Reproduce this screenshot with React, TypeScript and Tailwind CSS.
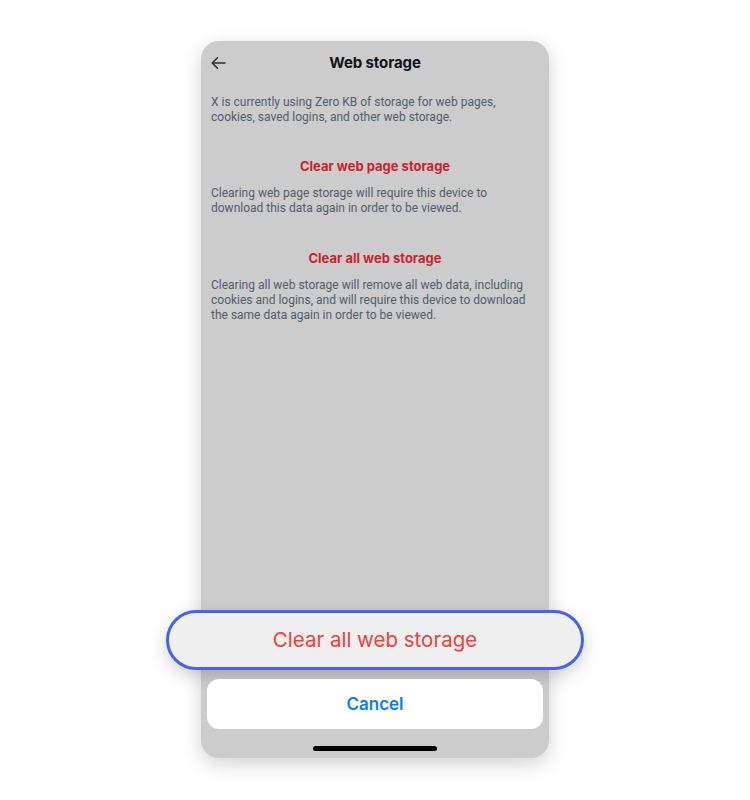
import React from 'react';

export default function App() {
  return (
    <div className="w-[750px] h-[800px] bg-white flex justify-center pt-[41px] font-['Inter','Noto_Sans',sans-serif]">
      <div className="w-[348px] h-[717px] bg-[#cccccc] rounded-[18px] shadow-[0_6px_20px_rgba(0,0,0,0.18)] flex flex-col">
        <div className="h-[44px] flex items-center relative px-[9px]">
          <svg width="18" height="18" viewBox="0 0 24 24" fill="none" stroke="#2a2a2a" strokeWidth="2" strokeLinecap="round" strokeLinejoin="round">
            <path d="M20 12H4" />
            <path d="M10 5l-7 7 7 7" />
          </svg>
          <div className="absolute inset-0 flex items-center justify-center text-[15px] font-bold text-[#0f1419] tracking-[-0.1px]">
            Web storage
          </div>
        </div>

        <div className="px-[10px] pt-[10px] font-['Roboto','Inter',sans-serif] text-[12px] leading-[15px] text-[#525d69]">
          <p>X is currently using Zero KB of storage for web pages, cookies, saved logins, and other web storage.</p>

          <div className="mt-[32px] text-center font-['Inter',sans-serif] text-[13px] leading-[18px] font-bold text-[#cc1f2e]">Clear web page storage</div>
          <p className="mt-[11px]">Clearing web page storage will require this device to download this data again in order to be viewed.</p>

          <div className="mt-[33px] text-center font-['Inter',sans-serif] text-[13px] leading-[18px] font-bold text-[#cc1f2e]">Clear all web storage</div>
          <p className="mt-[11px]">Clearing all web storage will remove all web data, including cookies and logins, and will require this device to download the same data again in order to be viewed.</p>
        </div>

        <div className="flex-1" />

        <div className="-mx-[35px] h-[60px] rounded-full border-[3px] border-[#4762f2] bg-[#efefef] shadow-[0_6px_18px_rgba(0,0,0,0.18)] flex items-center justify-center text-[20.5px] text-[#f0403a]">
          Clear all web storage
        </div>

        <div className="mx-[6px] mt-[9px] h-[50px] rounded-[12px] bg-white flex items-center justify-center text-[17px] font-semibold text-[#0a7bff]">
          <span className="translate-y-[1px]">Cancel</span>
        </div>

        <div className="mt-[17px] mb-[7px] mx-auto w-[124px] h-[5px] rounded-full bg-black" />
      </div>
    </div>
  );
}
